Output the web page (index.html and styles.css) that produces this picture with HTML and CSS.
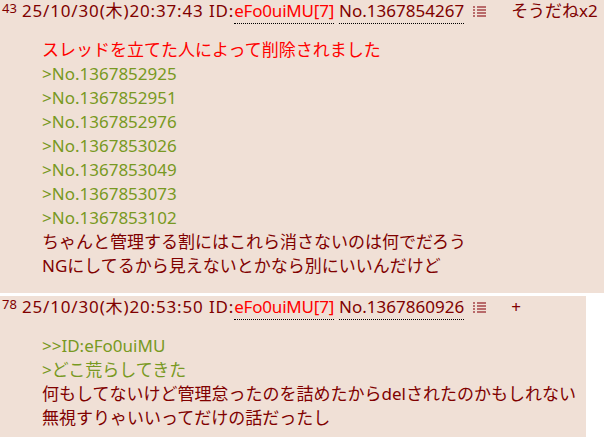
FILE: index.html
```html
<!DOCTYPE html>
<html lang="ja">
<head>
<meta charset="utf-8">
<title>レス</title>
<link rel="stylesheet" href="styles.css">
</head>
<body>
<div class="thread">
  <div class="post post-wide">
    <div class="head">
      <span class="rno">43</span>
      <span class="date">25/10/30(木)20:37:43 ID:</span><span class="uid">eFo0uiMU[7]</span>
      <span class="no">No.1367854267</span>
      <svg class="menu" width="13" height="11" viewBox="0 0 13 11" aria-hidden="true"><g fill="#b86a6a"><rect x="0" y="0" width="2" height="2"/><rect x="4" y="0" width="9" height="2"/><rect x="0" y="3" width="2" height="2"/><rect x="4" y="3" width="9" height="2"/><rect x="0" y="6" width="2" height="2"/><rect x="4" y="6" width="9" height="2"/><rect x="0" y="9" width="2" height="2"/><rect x="4" y="9" width="9" height="2"/></g></svg>
      <span class="sod">そうだねx2</span>
    </div>
    <div class="body">
      <div class="red">スレッドを立てた人によって削除されました</div>
      <div class="quote">&gt;No.1367852925</div>
      <div class="quote">&gt;No.1367852951</div>
      <div class="quote">&gt;No.1367852976</div>
      <div class="quote">&gt;No.1367853026</div>
      <div class="quote">&gt;No.1367853049</div>
      <div class="quote">&gt;No.1367853073</div>
      <div class="quote">&gt;No.1367853102</div>
      <div>ちゃんと管理する割にはこれら消さないのは何でだろう</div>
      <div>NGにしてるから見えないとかなら別にいいんだけど</div>
    </div>
  </div>
  <div class="post post-narrow">
    <div class="head">
      <span class="rno">78</span>
      <span class="date">25/10/30(木)20:53:50 ID:</span><span class="uid">eFo0uiMU[7]</span>
      <span class="no">No.1367860926</span>
      <svg class="menu" width="13" height="11" viewBox="0 0 13 11" aria-hidden="true"><g fill="#b86a6a"><rect x="0" y="0" width="2" height="2"/><rect x="4" y="0" width="9" height="2"/><rect x="0" y="3" width="2" height="2"/><rect x="4" y="3" width="9" height="2"/><rect x="0" y="6" width="2" height="2"/><rect x="4" y="6" width="9" height="2"/><rect x="0" y="9" width="2" height="2"/><rect x="4" y="9" width="9" height="2"/></g></svg>
      <span class="plus">+</span>
    </div>
    <div class="body">
      <div class="quote">&gt;&gt;ID:eFo0uiMU</div>
      <div class="quote">&gt;どこ荒らしてきた</div>
      <div>何もしてないけど管理怠ったのを詰めたからdelされたのかもしれない</div>
      <div>無視すりゃいいってだけの話だったし</div>
    </div>
  </div>
</div>
</body>
</html>
```

FILE: styles.css
```css
html, body {
  margin: 0;
  padding: 0;
  background: #ffffff;
}
body {
  font-family: "Noto Sans", "Noto Sans CJK JP", sans-serif;
  font-size: 17px;
  color: #800000;
}
.thread {
  display: flex;
  flex-direction: column;
  gap: 3px;
}
.post {
  background: #f0e0d6;
  padding: 0 0 15px 0;
}
.post-wide {
  width: 100%;
}
.post-narrow {
  width: 586px;
}
.head {
  display: flex;
  align-items: flex-start;
  height: 26px;
  padding-left: 2px;
  line-height: 22px;
  white-space: nowrap;
}
.rno {
  font-size: 13px;
  line-height: 16px;
  margin-right: 5px;
}
.date {
  letter-spacing: 0.85px;
}
.uid {
  color: #ff0000;
  border-bottom: 1px dotted #000;
  padding-bottom: 1px;
  letter-spacing: -0.2px;
  margin-right: 5px;
}
.no {
  border-bottom: 1px dotted #000;
  padding-bottom: 1px;
  margin-right: 9px;
}
.menu {
  margin-top: 6px;
  margin-right: 25px;
}
.sod, .plus {
  color: #800000;
}
.body {
  margin-left: 42px;
  padding-top: 12px;
  line-height: 24px;
}
.red {
  color: #ff0000;
}
.quote {
  color: #789922;
}
```
